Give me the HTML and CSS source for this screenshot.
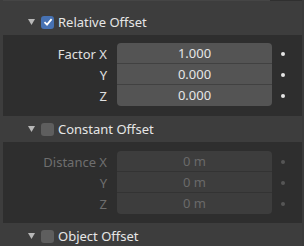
FILE: index.html
```html
<!DOCTYPE html>
<html lang="en">
<head>
    <meta charset="UTF-8">
    <title>Array Modifier</title>
    <link rel="stylesheet" href="styles.css">
</head>
<body>
    <div class="panel">
        <div class="top-line"></div>
        <div class="header first">
            <svg class="arrow" width="7" height="6" viewBox="0 0 7 6"><path d="M0 0 H7 L3.5 6 Z" fill="#b8b8b8"/></svg>
            <span class="check on">
                <svg width="12" height="12" viewBox="0 0 12 12"><path d="M2.5 6.2 L5 8.7 L9.6 3.2" fill="none" stroke="#fff" stroke-width="1.8"/></svg>
            </span>
            <span class="title">Relative Offset</span>
        </div>
        <div class="content">
            <div class="row">
                <span class="label">Factor X</span>
                <div class="field top">1.000</div>
                <span class="dot"></span>
            </div>
            <div class="row">
                <span class="label">Y</span>
                <div class="field">0.000</div>
                <span class="dot"></span>
            </div>
            <div class="row">
                <span class="label">Z</span>
                <div class="field bottom">0.000</div>
                <span class="dot"></span>
            </div>
        </div>

        <div class="header">
            <svg class="arrow" width="7" height="6" viewBox="0 0 7 6"><path d="M0 0 H7 L3.5 6 Z" fill="#b8b8b8"/></svg>
            <span class="check"></span>
            <span class="title">Constant Offset</span>
        </div>
        <div class="content disabled">
            <div class="row">
                <span class="label">Distance X</span>
                <div class="field top">0 m</div>
                <span class="dot"></span>
            </div>
            <div class="row">
                <span class="label">Y</span>
                <div class="field">0 m</div>
                <span class="dot"></span>
            </div>
            <div class="row">
                <span class="label">Z</span>
                <div class="field bottom">0 m</div>
                <span class="dot"></span>
            </div>
        </div>

        <div class="header">
            <svg class="arrow" width="7" height="6" viewBox="0 0 7 6"><path d="M0 0 H7 L3.5 6 Z" fill="#b8b8b8"/></svg>
            <span class="check"></span>
            <span class="title">Object Offset</span>
        </div>
    </div>
</body>
</html>
```

FILE: styles.css
```css
body {
    margin: 0;
    background: #303030;
    font-family: "Noto Sans", sans-serif;
    font-size: 13px;
    color: #e0e0e0;
    overflow: hidden;
}

.panel {
    width: 304px;
    height: 246px;
    border-left: 3px solid #3d3d3d;
    border-right: 2px solid #3a3a3a;
    box-sizing: border-box;
}

.top-line {
    height: 1px;
    margin-right: 32px;
    background: #454545;
}

.header {
    height: 26px;
    background: #3d3d3d;
    display: flex;
    align-items: center;
    padding-left: 25px;
}

.header.first {
    height: 34px;
    padding-top: 8px;
    box-sizing: border-box;
}

.arrow {
    margin-right: 6px;
}

.check {
    width: 13px;
    height: 13px;
    border-radius: 3px;
    background: #5e5e5e;
    margin-right: 4px;
    display: flex;
    align-items: center;
    justify-content: center;
}

.check.on {
    background: #4772b3;
}

.title {
    color: #e6e6e6;
}

.content {
    height: 81px;
    padding-top: 8px;
    box-sizing: border-box;
    background: #2e2e2e;
}

.content.disabled {
    padding-top: 9px;
}

.row {
    display: flex;
    align-items: center;
    height: 21px;
}

.label {
    width: 114px;
    text-align: right;
    padding-right: 10px;
    box-sizing: border-box;
    color: #e0e0e0;
}

.field {
    width: 155px;
    height: 21px;
    box-sizing: border-box;
    border-bottom: 1px solid #414141;
    background: #545454;
    text-align: center;
    line-height: 20px;
    color: #e6e6e6;
}

.field.top {
    border-radius: 4px 4px 0 0;
}

.field.bottom {
    border-radius: 0 0 4px 4px;
    border-bottom: 0;
    line-height: 21px;
}

.dot {
    width: 4px;
    height: 4px;
    border-radius: 50%;
    background: #e6e6e6;
    margin-left: 9px;
}

.disabled .label {
    color: #6e6e6e;
}

.disabled .field {
    background: #3d3d3d;
    border-bottom-color: #333;
    color: #6a6a6a;
}

.disabled .dot {
    background: #555;
}
```
